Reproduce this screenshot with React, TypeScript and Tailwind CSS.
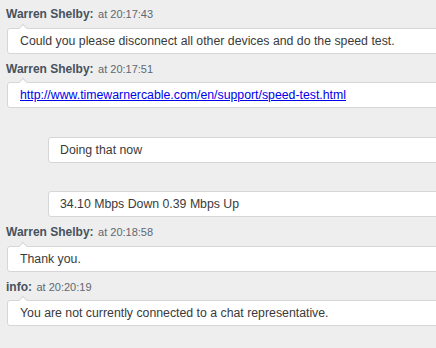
import React from 'react';

interface ChatItem {
  from: 'agent' | 'user';
  name?: string;
  time?: string;
  text: string;
  link?: boolean;
}

const items: ChatItem[] = [
  { from: 'agent', name: 'Warren Shelby:', time: 'at 20:17:43', text: 'Could you please disconnect all other devices and do the speed test.' },
  { from: 'agent', name: 'Warren Shelby:', time: 'at 20:17:51', text: 'http://www.timewarnercable.com/en/support/speed-test.html', link: true },
  { from: 'user', text: 'Doing that now' },
  { from: 'user', text: '34.10 Mbps Down 0.39 Mbps Up' },
  { from: 'agent', name: 'Warren Shelby:', time: 'at 20:18:58', text: 'Thank you.' },
  { from: 'agent', name: 'info:', time: 'at 20:20:19', text: 'You are not currently connected to a chat representative.' },
];

const Bubble = ({ item }: { item: ChatItem }) => {
  const isAgent = item.from === 'agent';
  return (
    <div
      className={`relative -mr-3 mb-[6px] rounded-[3px] border border-[#d6d6d6] bg-white py-[4px] text-[12.3px] leading-[16px] text-[#3a3a3a] ${
        isAgent ? 'ml-[7px] pl-[12px]' : 'ml-[48px] pl-[11px]'
      }`}
    >
      {isAgent && (
        <span className="absolute -top-[4px] left-[12px] h-[6px] w-[6px] rotate-45 border-l border-t border-[#d6d6d6] bg-white" />
      )}
      {item.link ? (
        <a href="#" className="text-[#0000ee] underline">
          {item.text}
        </a>
      ) : (
        item.text
      )}
    </div>
  );
};

export default function App() {
  return (
    <div
      className="h-[348px] w-[436px] overflow-hidden bg-[#eeeeee] pt-[5px]"
      style={{ fontFamily: '"Liberation Sans", Arial, sans-serif' }}
    >
      {items.map((item, index) => (
        <div key={index}>
          <div className="mb-[6.5px] h-[16px] pl-[6px] leading-[16px] whitespace-nowrap">
            {item.name && (
              <>
                <span className="text-[12px] font-bold text-[#47525d]">{item.name}</span>{' '}
                <span className="text-[11px] text-[#5f6870]">{item.time}</span>
              </>
            )}
          </div>
          <Bubble item={item} />
        </div>
      ))}
    </div>
  );
}
